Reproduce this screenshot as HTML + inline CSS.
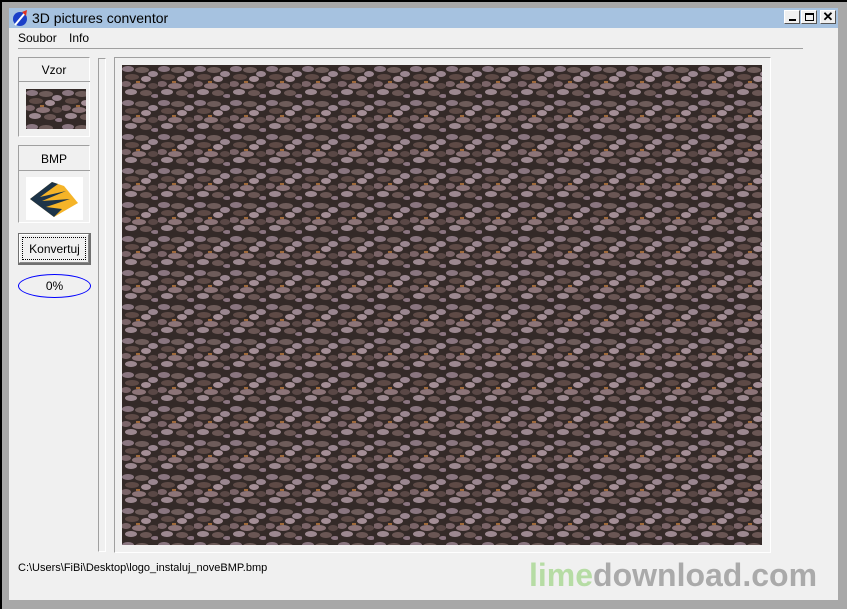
<!DOCTYPE html>
<html><head><style>
body{margin:0;width:847px;height:609px;background:#000;position:relative;overflow:hidden;font-family:"Liberation Sans",sans-serif;font-size:12px}
.a{position:absolute}
</style></head><body>
<div class="a" style="left:2px;top:2px;width:845px;height:607px;background:#a8a8a8"></div>
<div class="a" style="left:9px;top:8px;width:829px;height:592px;background:#f0f0f0"></div>
<div class="a" style="left:9px;top:8px;width:829px;height:20px;background:#a6c2e0"></div>
<svg class="a" style="left:11px;top:9px" width="18" height="18" viewBox="0 0 18 18"><ellipse cx="9" cy="10" rx="7" ry="7" fill="#1a3fc8"/><path d="M4 16 L14 4" stroke="#fff" stroke-width="2"/><path d="M11 3 L16 1 L15 7Z" fill="#e03020"/></svg>
<div class="a" style="left:32px;top:10px;font-size:14px;color:#000">3D pictures conventor</div>
<div class="a" style="left:784px;top:10px;width:16px;height:14px;background:#f0f0f0;border:1px solid;border-color:#fff #555 #555 #fff;box-sizing:border-box"><div class="a" style="left:4px;top:8px;width:7px;height:2px;background:#000"></div></div>
<div class="a" style="left:801px;top:10px;width:16px;height:14px;background:#f0f0f0;border:1px solid;border-color:#fff #555 #555 #fff;box-sizing:border-box"><div class="a" style="left:3px;top:2px;width:9px;height:8px;border:1px solid #000;border-top-width:2px;box-sizing:border-box"></div></div>
<div class="a" style="left:820px;top:10px;width:16px;height:14px;background:#f0f0f0;border:1px solid;border-color:#fff #555 #555 #fff;box-sizing:border-box;font-weight:bold;font-size:13px;line-height:11px;text-align:center">✕</div>
<div class="a" style="left:18px;top:31px">Soubor</div>
<div class="a" style="left:69px;top:31px">Info</div>
<div class="a" style="left:18px;top:48px;width:785px;height:1px;background:#a0a0a0"></div>
<div class="a" style="left:18px;top:57px;width:72px;height:80px;border:1px solid #a0a0a0;border-right-color:#fff;border-bottom-color:#fff;box-sizing:border-box"></div>
<div class="a" style="left:18px;top:81px;width:72px;height:1px;background:#a0a0a0"></div>
<div class="a" style="left:18px;top:63px;width:72px;text-align:center">Vzor</div>
<svg class="a" style="left:26px;top:89px" width="60" height="40"><rect width="60" height="40" fill="url(#st)"/></svg>
<div class="a" style="left:18px;top:145px;width:72px;height:78px;border:1px solid #a0a0a0;border-right-color:#fff;border-bottom-color:#fff;box-sizing:border-box"></div>
<div class="a" style="left:18px;top:170px;width:72px;height:1px;background:#a0a0a0"></div>
<div class="a" style="left:18px;top:152px;width:72px;text-align:center">BMP</div>
<svg class="a" style="left:26px;top:177px" width="57" height="43"><rect width="57" height="43" fill="#fff"/><path d="M4 22 L26 5 L38 9 L52 26 L28 40Z" fill="#f5b428"/><path d="M4 22 L26 5 L32 7 L14 20 L40 14 L16 24 L44 22 L20 30 L36 32 L28 40Z" fill="#1d3448"/></svg>
<div class="a" style="left:18px;top:233px;width:73px;height:32px;background:#707070"></div>
<div class="a" style="left:19px;top:234px;width:70px;height:29px;background:#f0f0f0;border:1px solid;border-color:#fff #888 #888 #fff;box-sizing:border-box"></div>
<div class="a" style="left:22px;top:237px;width:64px;height:23px;border:1px dotted #000;box-sizing:border-box"></div>
<div class="a" style="left:18px;top:242px;width:73px;text-align:center">Konvertuj</div>
<div class="a" style="left:18px;top:274px;width:73px;height:24px;border:1px solid #0000ff;border-radius:50%;box-sizing:border-box;text-align:center;line-height:22px">0%</div>
<div class="a" style="left:98px;top:58px;width:8px;height:494px;border:1px solid #a0a0a0;border-right-color:#fff;border-bottom-color:#fff;box-sizing:border-box"></div>
<div class="a" style="left:114px;top:57px;width:657px;height:496px;border:1px solid #a0a0a0;border-right-color:#fff;border-bottom-color:#fff;box-sizing:border-box"></div>
<svg class="a" style="left:122px;top:65px" width="640" height="480">
<defs><pattern id="st" width="36" height="34" patternUnits="userSpaceOnUse">
<rect width="36" height="34" fill="#342a28"/>
<ellipse cx="6" cy="4" rx="6" ry="3" fill="#8a7680"/>
<ellipse cx="20" cy="5" rx="7" ry="3" fill="#6e5c5a"/>
<ellipse cx="31" cy="9" rx="5" ry="3" fill="#9a8690"/>
<ellipse cx="10" cy="12" rx="7" ry="3" fill="#5e4a46"/>
<ellipse cx="24" cy="14" rx="5" ry="3" fill="#a48e96"/>
<ellipse cx="4" cy="19" rx="5" ry="3" fill="#7a6468"/>
<ellipse cx="17" cy="21" rx="7" ry="3" fill="#8c7478"/>
<ellipse cx="31" cy="21" rx="5" ry="3" fill="#5a4846"/>
<ellipse cx="9" cy="27" rx="6" ry="3" fill="#9c8890"/>
<ellipse cx="24" cy="28" rx="6" ry="3" fill="#6a5654"/>
<rect x="14" y="16" width="4" height="2" fill="#a06a3a"/>
<ellipse cx="33" cy="31" rx="4" ry="2" fill="#8a7480"/>
</pattern></defs>
<rect width="640" height="480" fill="url(#st)"/></svg>
<div class="a" style="left:18px;top:562px;font-size:11px">C:\Users\FiBi\Desktop\logo_instaluj_noveBMP.bmp</div>
<div class="a" style="left:529px;top:557px;font-size:32px;font-weight:bold"><span style="color:#b6dca4">lime</span><span style="color:#aaa">download.com</span></div>
</body></html>
